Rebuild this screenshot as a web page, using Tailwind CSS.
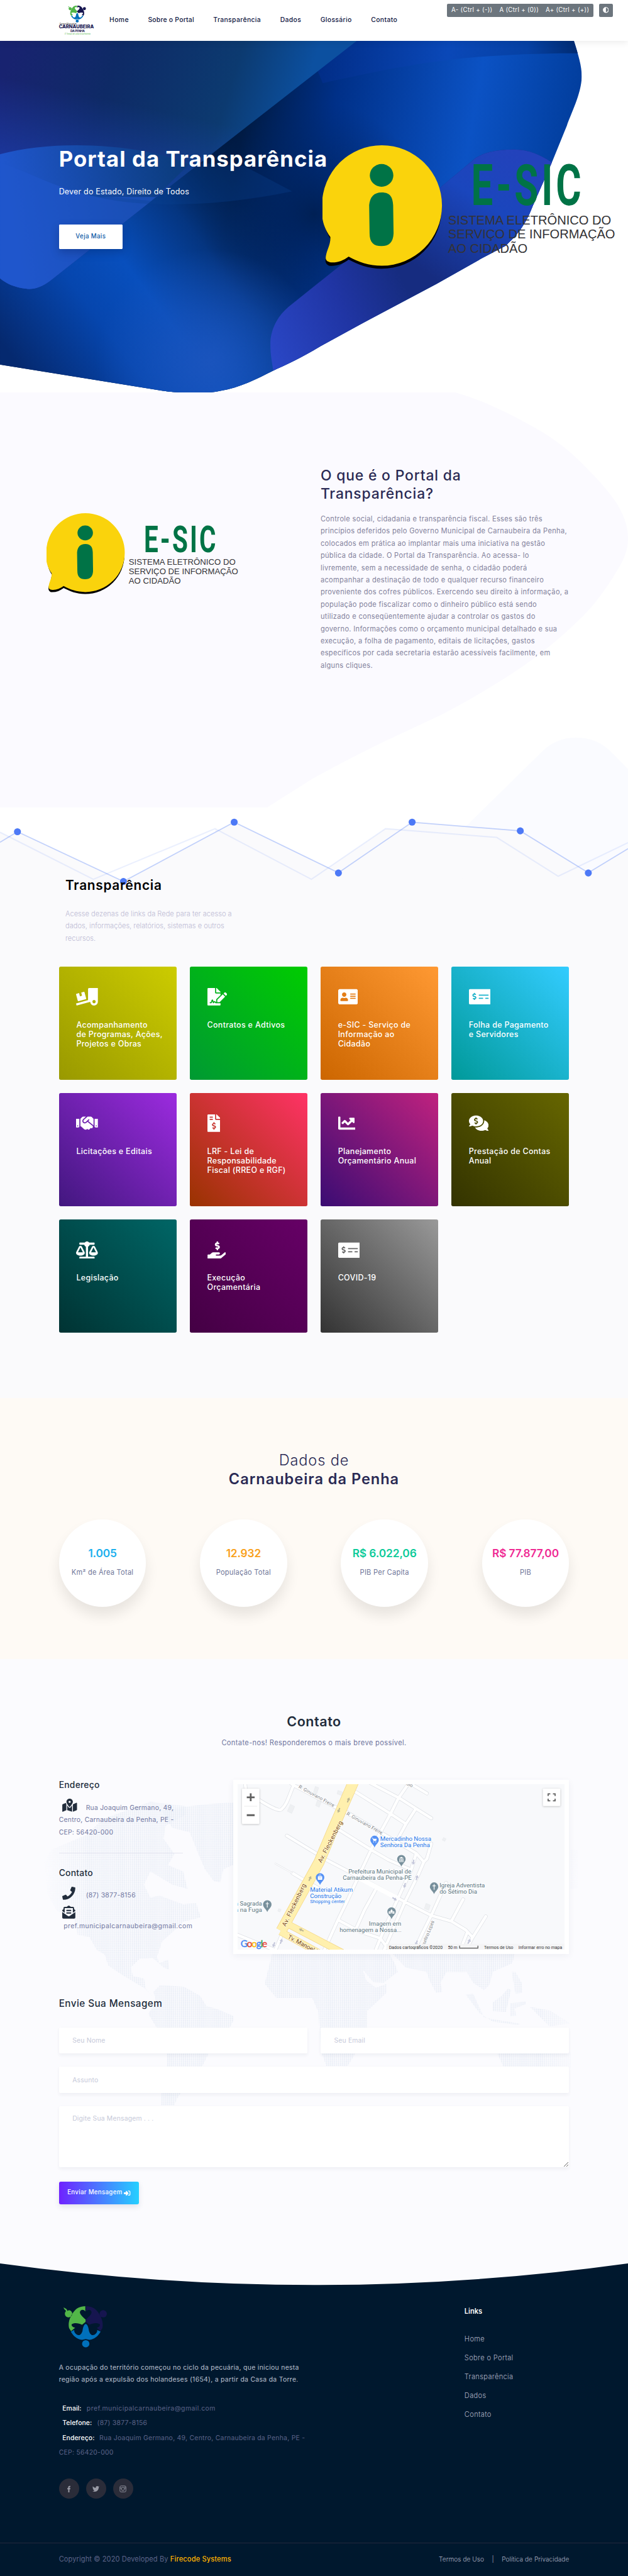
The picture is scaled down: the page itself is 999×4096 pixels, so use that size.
<!DOCTYPE html>
<html lang="pt-BR">
<head>
<meta charset="utf-8">
<title>Portal da Transparência</title>
<script src="https://cdn.jsdelivr.net/npm/@tailwindcss/browser@4"></script>
</head>
<body class="bg-[#00182e] overflow-x-hidden">

<svg class="absolute w-0 h-0" aria-hidden="true">
  <defs>
    <symbol id="emblem" viewBox="0 0 103 96">
      <path fill="#52b648" d="M0 3C6 5 9 8 9 11L13 9A8.500 8.500 0 1 1 6 11C3 9 1 6 0 3ZM50.500 0C38 0 29 5 23 14C14 26 10 40 13 51L17.500 58L27 50C19 48 17 43 20 41C26 38 36 39 43 43L51.400 36L51.400 31C44 25 38 19 38 14C39 7 47 7 50.500 12Z"/>
      <path fill="#16154f" d="M52.500 0C65 0 74 5 80 14C89 26 93 40 90 51L85.500 58L77 50C84 48 86 43 83 41C77 38 67 39 60 43L51.400 36L51.400 31C59 25 65 19 65 14C64 7 56 7 52.500 12Z"/>
      <circle cx="92" cy="17.500" r="8.500" fill="#16154f"/>
      <path fill="#0070bb" d="M51.500 41C56 42 58 50 59 57C61 65 66 69 72 66C77 63 79 58 78 55L86 59C81 68 72 77 60 78L51.500 76L43 78C31 77 22 68 17 59L25 55C24 58 26 63 31 66C37 69 42 65 44 57C45 50 47 42 51.500 41Z"/>
      <circle cx="51.500" cy="87" r="8.500" fill="#0070bb"/>
    </symbol>
    <symbol id="esic" viewBox="739 333 672 284">
      <path fill="#000" d="M875 341a137 137 0 1 1-1 275C845 616 820 606 799 595C785 606 768 611 754 609C748 606 745 602 746 594C749 578 757 565 757 547C747 532 740 510 739 477Z"/>
      <path fill="#fad30c" d="M875 333a137.500 137.500 0 0 1 0 276C846 609 820 600 799 588C786 598 770 603 756 601C748 599 745 595 747 586C750 570 758 560 757 543C733 510 738 480 738 470A137 137 0 0 1 875 333Z"/>
      <ellipse cx="874.500" cy="402" rx="27" ry="26" fill="#007346"/>
      <path fill="#007346" d="M875 441C895 441 900 453 901 470L902 535C901 555 892 564 874 564C856 564 847 555 847 535L846 470C848 452 856 441 875 441Z"/>
      <text transform="translate(1080 469.500) scale(0.68 1)" font-family="Roboto" font-weight="700" font-size="131" fill="#007346" textLength="371" lengthAdjust="spacing">E-SIC</text>
      <g font-family="Liberation Sans" font-size="29.300" fill="#333336">
        <text x="1027" y="514.500" textLength="374" lengthAdjust="spacingAndGlyphs">SISTEMA ELETRÔNICO DO</text>
        <text x="1027" y="547" textLength="383" lengthAdjust="spacingAndGlyphs">SERVIÇO DE INFORMAÇÃO</text>
        <text x="1027" y="579" textLength="182" lengthAdjust="spacingAndGlyphs">AO CIDADÃO</text>
      </g>
    </symbol>
    <symbol id="check" viewBox="0 0 640 512"><path d="M608 32H32C14.330 32 0 46.330 0 64v384c0 17.670 14.330 32 32 32h576c17.670 0 32-14.330 32-32V64c0-17.670-14.330-32-32-32zM176 327.880V344c0 4.420-3.580 8-8 8h-16c-4.420 0-8-3.580-8-8v-16.290c-11.290-.58-22.270-4.520-31.370-11.350-3.900-2.930-4.100-8.770-.57-12.140l11.750-11.210c2.770-2.640 6.890-2.760 10.130-.73 3.870 2.420 8.260 3.720 12.820 3.720h28.110c6.500 0 11.800-5.920 11.800-13.190 0-5.950-3.610-11.190-8.770-12.730l-45-13.500c-18.590-5.580-31.580-23.420-31.580-43.390 0-24.520 19.050-44.440 42.670-45.070V152c0-4.420 3.580-8 8-8h16c4.420 0 8 3.580 8 8v16.290c11.290.58 22.270 4.510 31.370 11.350 3.900 2.930 4.100 8.770.57 12.140l-11.750 11.210c-2.770 2.640-6.890 2.760-10.130.73-3.870-2.430-8.260-3.720-12.820-3.720h-28.110c-6.500 0-11.800 5.920-11.800 13.190 0 5.950 3.610 11.190 8.770 12.730l45 13.500c18.590 5.580 31.580 23.420 31.580 43.390 0 24.530-19.050 44.440-42.670 45.070zM416 312c0 4.420-3.580 8-8 8H296c-4.420 0-8-3.580-8-8v-16c0-4.420 3.580-8 8-8h112c4.420 0 8 3.580 8 8v16zm160 0c0 4.420-3.580 8-8 8h-80c-4.420 0-8-3.580-8-8v-16c0-4.420 3.580-8 8-8h80c4.420 0 8 3.580 8 8v16zm0-96c0 4.420-3.580 8-8 8H296c-4.420 0-8-3.580-8-8v-16c0-4.420 3.580-8 8-8h272c4.420 0 8 3.580 8 8v16z"/></symbol>
  </defs>
</svg>

<div class="w-[1440px] h-[5905px] overflow-hidden [zoom:0.69375] bg-white font-[Inter,sans-serif] relative">

<!-- Header -->
<header class="relative z-20 h-[93px] bg-white flex items-center pl-[134px] pr-[35px] shadow-[0_5px_14px_rgba(0,0,0,0.07)]">
  <svg class="w-[83px] h-[70px] shrink-0" viewBox="0 0 83 70">
    <use href="#emblem" x="22" y="1" width="42" height="39.500"/>
    <g text-anchor="middle" font-family="Inter">
      <text x="22" y="44.500" font-size="4.200" fill="#222" textLength="39">Governo Municipal de</text>
      <text x="41" y="54" font-size="10.500" font-weight="800" fill="#16154f" textLength="80" lengthAdjust="spacingAndGlyphs">CARNAUBEIRA</text>
      <text x="44" y="61.500" font-size="7" font-weight="700" fill="#16154f" textLength="33">DA PENHA</text>
      <text x="44" y="68" font-size="4.500" font-style="italic" fill="#52b648" textLength="59">É Tempo de uma nova história</text>
    </g>
  </svg>
  <nav class="flex gap-[44px] ml-[34px] text-[15px] font-medium tracking-[0.035em] text-[#0d1440] whitespace-nowrap">
    <a>Home</a><a class="tracking-[0.021em]">Sobre o Portal</a><a>Transparência</a><a>Dados</a><a>Glossário</a><a>Contato</a>
  </nav>
  <div class="ml-auto self-start mt-[8px] flex gap-[12px] text-white">
    <div class="h-[31px] w-[336px] rounded-[3px] bg-[#6c757d] flex items-center justify-between px-[10px] text-[14px] tracking-[0.034em] whitespace-nowrap"><span>A- (Ctrl + (-))</span><span>A (Ctrl + (0))</span><span>A+ (Ctrl + (+))</span></div>
    <div class="h-[31px] w-[32px] rounded-[3px] bg-[#6c757d] flex items-center justify-center"><svg class="w-[14px] h-[14px]" viewBox="0 0 512 512" fill="currentColor"><path d="M8 256c0 136.966 111.033 248 248 248s248-111.034 248-248S392.966 8 256 8 8 119.033 8 256zm248 184V72c101.705 0 184 82.311 184 184 0 101.705-82.311 184-184 184z"/></svg></div>
  </div>
</header>

<!-- Hero -->
<section class="relative h-[807px] bg-white pl-[135px] pt-[241px] text-white">
  <svg class="absolute inset-0 w-[1440px] h-[807px]" viewBox="0 93 1440 807">
    <defs>
      <clipPath id="blob"><path d="M0 93H1316C1326 125 1334 150 1334 175C1333 215 1308 262 1300 287L1267 368L1221 473C1205 515 1185 540 1159 563L1102 593L1001 650L826 743L735 793C690 820 655 836 624 850C590 867 550 888 505 895C480 900 460 900 441 899C410 899 390 898 367 894L0 835Z"/></clipPath>
      <linearGradient id="hm" gradientUnits="userSpaceOnUse" x1="560" y1="280" x2="1340" y2="420"><stop offset="0" stop-color="#001a42"/><stop offset=".25" stop-color="#003088"/><stop offset=".65" stop-color="#0b52c4"/><stop offset="1" stop-color="#003a96"/></linearGradient>
      <linearGradient id="hb" gradientUnits="userSpaceOnUse" x1="60" y1="860" x2="620" y2="440"><stop offset="0" stop-color="#05296f"/><stop offset=".3" stop-color="#0646ae"/><stop offset=".48" stop-color="#084fbd"/><stop offset=".72" stop-color="#053887" stop-opacity=".9"/><stop offset="1" stop-color="#002356" stop-opacity="0"/></linearGradient>
      <linearGradient id="ht" gradientUnits="userSpaceOnUse" x1="730" y1="60" x2="1330" y2="110"><stop offset="0" stop-color="#012c85"/><stop offset=".5" stop-color="#0a48b8"/><stop offset=".8" stop-color="#0641a4"/><stop offset="1" stop-color="#002a70"/></linearGradient>
      <linearGradient id="hl" gradientUnits="userSpaceOnUse" x1="0" y1="200" x2="640" y2="400"><stop offset="0" stop-color="#182370"/><stop offset=".35" stop-color="#0e2a66"/><stop offset=".75" stop-color="#0c3a70"/><stop offset="1" stop-color="#0c50a0"/></linearGradient>
      <linearGradient id="hlv" gradientUnits="userSpaceOnUse" x1="120" y1="200" x2="60" y2="480"><stop offset="0" stop-color="#2045c0" stop-opacity="0"/><stop offset="1" stop-color="#2045c0" stop-opacity=".85"/></linearGradient>
      <linearGradient id="he" gradientUnits="userSpaceOnUse" x1="20" y1="450" x2="400" y2="380"><stop offset="0" stop-color="#1f56cc"/><stop offset="1" stop-color="#0c3d80"/></linearGradient>
      <radialGradient id="hd" gradientUnits="userSpaceOnUse" cx="720" cy="490" r="260"><stop offset="0" stop-color="#001f52" stop-opacity=".95"/><stop offset="1" stop-color="#00286a" stop-opacity="0"/></radialGradient>
      <radialGradient id="hc" gradientUnits="userSpaceOnUse" cx="480" cy="830" r="260"><stop offset="0" stop-color="#1a54bd"/><stop offset="1" stop-color="#1a54bd" stop-opacity="0"/></radialGradient>
      <linearGradient id="hp" gradientUnits="userSpaceOnUse" x1="610" y1="800" x2="1010" y2="620"><stop offset="0" stop-color="#2a47c6"/><stop offset=".45" stop-color="#2035a4"/><stop offset=".8" stop-color="#162c80"/><stop offset="1" stop-color="#162c80"/></linearGradient>
      <linearGradient id="hp2" gradientUnits="userSpaceOnUse" x1="1000" y1="640" x2="1190" y2="350"><stop offset="0" stop-color="#1a46bd" stop-opacity="0"/><stop offset=".6" stop-color="#1a46bd"/><stop offset="1" stop-color="#2342bb"/></linearGradient>
    </defs>
    <g clip-path="url(#blob)">
      <rect y="93" width="1440" height="810" fill="url(#hm)"/>
      <path d="M700 93H1440V124C1290 118 1170 123 1060 133C950 145 860 163 740 190Z" fill="url(#ht)"/>
      <rect y="93" width="1440" height="810" fill="url(#hb)"/>
      <rect x="400" y="200" width="600" height="600" fill="url(#hd)"/>
      <rect x="200" y="560" width="560" height="340" fill="url(#hc)"/>
      <path d="M0 93H818L347 460L280 513L115 643C95 658 75 664 60 661C35 658 15 650 0 637Z" fill="url(#hl)"/>
      <path d="M0 93H818L347 460L280 513L115 643C95 658 75 664 60 661C35 658 15 650 0 637Z" fill="url(#hlv)"/>
      <path d="M0 353C60 336 140 330 211 333C300 337 370 350 434 376L347 460L280 513L115 643C95 658 75 664 60 661C35 658 15 650 0 637Z" fill="url(#he)"/>
      <path d="M0 371C90 405 150 440 230 451L358 451L347 460L280 513L115 643C95 658 75 664 60 661C35 658 15 650 0 637Z" fill="#1f57cc" opacity=".6"/>
      <path d="M200 445C300 475 480 478 670 438L560 380L440 372L347 460Z" fill="#0b4192" opacity=".3"/>
      <path d="M1175 342C1130 343 1110 350 1090 362L1012 427L790 600L661 703C632 728 620 760 620 787C620 815 624 830 627 852L700 900L1300 700L1290 390C1240 350 1210 342 1175 342Z" fill="url(#hp)"/>
      <path d="M1175 342C1130 343 1110 350 1090 362L1012 427L790 600L661 703C632 728 620 760 620 787C620 815 624 830 627 852L700 900L1300 700L1290 390C1240 350 1210 342 1175 342Z" fill="url(#hp2)"/>
    </g>
  </svg>
  <h1 class="relative text-[50px] leading-[60px] font-bold tracking-[0.031em] whitespace-nowrap">Portal da Transparência</h1>
  <svg class="absolute left-[739px] top-[240px] w-[672px] h-[284px]"><use href="#esic" width="672" height="284"/></svg>
  <p class="relative mt-[31px] text-[18px] leading-[28px] tracking-[0.016em]">Dever do Estado, Direito de Todos</p>
  <a class="relative mt-[62px] w-[146px] h-[56px] bg-white rounded-[2px] flex items-center justify-center text-[14px] font-medium tracking-[0.037em] text-[#0c5aa6] shadow-[0_8px_20px_rgba(0,20,60,0.25)]">Veja Mais</a>
</section>

<!-- Sobre o Portal -->
<section class="relative h-[951px] bg-white flex pl-[107px]">
  <svg class="absolute inset-0 w-[1440px] h-[951px]" viewBox="0 900 1440 951"><path fill="#fbfaff" d="M0 900H1044C1085 912 1118 925 1148 940C1190 960 1220 977 1249 994C1290 1020 1318 1045 1341 1069C1375 1103 1398 1130 1414 1154C1430 1180 1440 1205 1440 1235C1440 1262 1430 1285 1414 1310C1390 1350 1362 1390 1322 1427C1285 1463 1245 1495 1203 1525C1145 1565 1080 1603 1010 1640L882 1699.500C825 1727 770 1756 716 1785.600L613 1851H0Z"/></svg>
  <svg class="relative mt-[276px] w-[440px] h-[186px] shrink-0"><use href="#esic" width="440" height="186"/></svg>
  <div class="relative ml-[188px] pt-[169px] whitespace-nowrap">
    <h2 class="text-[33px] leading-[42px] font-medium tracking-[0.036em] text-[#2a2a54]">O que é o Portal da<br>Transparência?</h2>
    <p class="mt-[23px] text-[16px] leading-[28px] tracking-[0.028em] text-[#83829c]">Controle social, cidadania e transparência fiscal. Esses são três<br>princípios deferidos pelo Governo Municipal de Carnaubeira da Penha,<br>colocados em prática ao implantar mais uma iniciativa na gestão<br>pública da cidade. O Portal da Transparência. Ao acessa- lo<br>livremente, sem a necessidade de senha, o cidadão poderá<br>acompanhar a destinação de todo e qualquer recurso financeiro<br>proveniente dos cofres públicos. Exercendo seu direito à informação, a<br>população pode fiscalizar como o dinheiro público está sendo<br>utilizado e conseqüentemente ajudar a controlar os gastos do<br>governo. Informações como o orçamento municipal detalhado e sua<br>execução, a folha de pagamento, editais de licitações, gastos<br>específicos por cada secretaria estarão acessíveis facilmente, em<br>alguns cliques.</p>
  </div>
</section>

<!-- Transparência -->
<section class="relative h-[1354px] pt-[159px]">
  <svg class="absolute left-0 -top-[161px] w-[1440px] h-[1515px]" viewBox="0 1690 1440 1515">
    <path fill="#fafbff" d="M1070 1893L1240 1726C1262 1703 1290 1691 1320 1691C1350 1691 1375 1700 1396 1719L1440 1763V2100H1000Z"/>
    <path fill="#fafafc" d="M0 1931L40 1907L283 2021L537 1885L776 2001L945 1885L1193 1905L1349 2001L1440 1946V3205H0Z"/>
    <path fill="#fafafc" d="M0 1908L214 2016L283 2030L0 2030ZM493 1900L714 2016L884 1900L1139 1920L1280 2009L1349 2010L500 2020Z"/>
    <path fill="none" stroke="#4d79f6" stroke-opacity=".11" stroke-width="3" d="M0 1908L214 2016L493 1900L714 2016L884 1900L1139 1920L1280 2009L1440 1932"/>
    <path fill="none" stroke="#4d79f6" stroke-opacity=".33" stroke-width="2.500" d="M0 1931L40 1907L283 2021L537 1885L776 2001L945 1885L1193 1905L1349 2001L1440 1946"/>
    <g fill="#4d79f6"><circle cx="40" cy="1907" r="8"/><circle cx="283" cy="2021" r="8"/><circle cx="537" cy="1885" r="8"/><circle cx="776" cy="2001.500" r="8"/><circle cx="945" cy="1885" r="8"/><circle cx="1193" cy="1905" r="8"/><circle cx="1349" cy="2001.500" r="8"/></g>
  </svg>
  <div class="relative pl-[150px] whitespace-nowrap">
    <h2 class="text-[30px] leading-[40px] font-semibold tracking-[0.035em] text-black">Transparência</h2>
    <p class="mt-[31px] text-[16px] leading-[28px] font-light text-[#bdbad4]">Acesse dezenas de links da Rede para ter acesso a<br>dados, informações, relatórios, sistemas e outros<br>recursos.</p>
  </div>
  <div class="relative mt-[50px] px-[135px] grid grid-cols-4 auto-rows-[260px] gap-[30px] text-white text-[18px] leading-[22px] font-medium tracking-[0.025em] whitespace-nowrap">
    <a class="rounded-[4px] pl-[40px] pt-[50px] bg-[linear-gradient(45deg,#999900,#cccc00)]"><svg class="h-[40px] w-[50px]" viewBox="0 0 640 512" fill="currentColor"><path d="M50.200 375.600c2.300 8.500 11.100 13.600 19.600 11.300l216.400-58c8.500-2.300 13.600-11.100 11.300-19.600l-49.700-185.500c-2.300-8.500-11.100-13.600-19.600-11.300L151 133.300l24.800 92.700-61.800 16.500-24.800-92.700-77.300 20.700C3.400 172.800-1.700 181.600.6 190.100l49.600 185.500zM384 0c-17.700 0-32 14.300-32 32v323.600L5.900 450c-4.300 1.200-6.800 5.600-5.600 9.800l12.600 46.300c1.200 4.300 5.600 6.800 9.800 5.600l393.700-107.400C418.800 464.100 467.600 512 528 512c61.900 0 112-50.100 112-112V0H384zm144 448c-26.500 0-48-21.500-48-48s21.500-48 48-48 48 21.500 48 48-21.500 48-48 48z"/></svg><h3 class="mt-[32.5px]">Acompanhamento<br>de Programas, Ações,<br>Projetos e Obras</h3></a>
    <a class="rounded-[4px] pl-[40px] pt-[50px] bg-[linear-gradient(45deg,#009933,#00cc00)]"><svg class="h-[40px] w-[45px]" viewBox="0 0 576 512" fill="currentColor"><path d="M218.170 424.140c-2.950-5.920-8.090-6.520-10.170-6.520s-7.220.59-10.020 6.190l-7.670 15.340c-6.370 12.780-25.030 11.370-29.480-2.090L144 386.590l-10.610 31.880c-5.890 17.660-22.380 29.530-41 29.530H80c-8.840 0-16-7.160-16-16s7.160-16 16-16h12.390c4.830 0 9.110-3.080 10.640-7.660l18.190-54.640c3.300-9.810 12.440-16.410 22.780-16.410s19.480 6.590 22.770 16.410l13.880 41.640c19.750-16.190 54.060-9.700 66 14.160 1.890 3.780 5.490 5.950 9.360 6.260v-82.120l128-127.090V160H248c-13.200 0-24-10.800-24-24V0H24C10.700 0 0 10.700 0 24v464c0 13.300 10.700 24 24 24h336c13.300 0 24-10.700 24-24v-40l-128-.11c-16.120-.31-30.580-9.280-37.830-23.750zM384 121.900c0-6.300-2.500-12.400-7-16.900L279.100 7c-4.500-4.500-10.600-7-17-7H256v128h128v-6.100zm-96 225.060V416h68.990l161.680-162.780-67.880-67.880L288 346.960zm280.540-179.630l-31.870-31.870c-9.940-9.940-26.070-9.940-36.010 0l-27.250 27.250 67.880 67.880 27.250-27.250c9.950-9.940 9.950-26.070 0-36.010z"/></svg><h3 class="mt-[32.5px]">Contratos e Adtivos</h3></a>
    <a class="rounded-[4px] pl-[40px] pt-[50px] bg-[linear-gradient(45deg,#cc6600,#ff9933)]"><svg class="h-[40px] w-[45px]" viewBox="0 0 576 512" fill="currentColor"><path d="M528 32H48C21.500 32 0 53.500 0 80v352c0 26.500 21.500 48 48 48h480c26.500 0 48-21.500 48-48V80c0-26.500-21.500-48-48-48zm-352 96c35.300 0 64 28.700 64 64s-28.700 64-64 64-64-28.700-64-64 28.700-64 64-64zm112 236.800c0 10.600-10 19.200-22.400 19.200H86.400C74 384 64 375.400 64 364.800v-19.200c0-31.800 30.100-57.600 67.200-57.600h5c12.300 5.100 25.700 8 39.800 8s27.600-2.900 39.800-8h5c37.100 0 67.200 25.800 67.200 57.600v19.200zM512 312c0 4.400-3.600 8-8 8H360c-4.400 0-8-3.600-8-8v-16c0-4.400 3.600-8 8-8h144c4.400 0 8 3.600 8 8v16zm0-64c0 4.400-3.600 8-8 8H360c-4.400 0-8-3.600-8-8v-16c0-4.400 3.600-8 8-8h144c4.400 0 8 3.600 8 8v16zm0-64c0 4.400-3.600 8-8 8H360c-4.400 0-8-3.600-8-8v-16c0-4.400 3.600-8 8-8h144c4.400 0 8 3.600 8 8v16z"/></svg><h3 class="mt-[32.5px]">e-SIC - Serviço de<br>Informação ao<br>Cidadão</h3></a>
    <a class="rounded-[4px] pl-[40px] pt-[50px] bg-[linear-gradient(45deg,#009999,#33ccff)]"><svg class="h-[40px] w-[50px] fill-current"><use href="#check" width="50" height="40"/></svg><h3 class="mt-[32.5px]">Folha de Pagamento<br>e Servidores</h3></a>
    <a class="rounded-[4px] pl-[40px] pt-[50px] bg-[linear-gradient(45deg,#42177f,#9c2bdf)]"><svg class="h-[40px] w-[50px]" viewBox="0 0 640 512" fill="currentColor"><path d="M434.700 64h-85.900c-8 0-15.700 3-21.600 8.400l-98.300 90c-.1.1-.2.3-.3.4-16.600 15.600-16.300 40.500-2.100 56 12.700 13.900 39.400 17.600 56.100 2.700.1-.1.3-.1.4-.2l79.900-73.200c6.500-5.900 16.700-5.500 22.600 1 6 6.500 5.500 16.600-1 22.600l-26.100 23.900L504 313.800c2.900 2.400 5.500 5 7.900 7.700V128l-54.600-54.600c-5.900-6-14.100-9.400-22.600-9.400zM544 128.200v223.900c0 17.700 14.300 32 32 32h64V128.200h-96zm48 223.900c-8.800 0-16-7.200-16-16s7.200-16 16-16 16 7.200 16 16-7.200 16-16 16zM0 384h64c17.700 0 32-14.300 32-32V128.200H0V384zm48-63.900c8.800 0 16 7.200 16 16s-7.200 16-16 16-16-7.200-16-16c0-8.900 7.200-16 16-16zm435.900 18.600L334.600 217.500l-30 27.500c-29.700 27.100-75.200 24.500-101.700-4.400-26.900-29.400-24.800-74.900 4.400-101.700L289.100 64h-83.800c-8.500 0-16.600 3.400-22.600 9.400L128 128v223.900h18.300l90.500 81.900c27.400 22.300 67.700 18.100 90-9.300l.2-.2 17.900 15.500c15.900 13 39.400 10.500 52.300-5.400l31.400-38.600 5.400 4.400c13.700 11.100 33.900 9.100 45-4.700l9.500-11.700c11.200-13.800 9.100-33.900-4.600-45.100z"/></svg><h3 class="mt-[32.5px]">Licitações e Editais</h3></a>
    <a class="rounded-[4px] pl-[40px] pt-[50px] bg-[linear-gradient(45deg,#993300,#ff3366)]"><svg class="h-[40px] w-[30px]" viewBox="0 0 384 512" fill="currentColor"><path d="M377 105L279.100 7c-4.500-4.500-10.600-7-17-7H256v128h128v-6.100c0-6.300-2.500-12.400-7-16.900zm-153 31V0H24C10.700 0 0 10.700 0 24v464c0 13.300 10.700 24 24 24h336c13.300 0 24-10.700 24-24V160H248c-13.200 0-24-10.800-24-24zM64 72c0-4.420 3.580-8 8-8h80c4.420 0 8 3.580 8 8v16c0 4.420-3.580 8-8 8H72c-4.420 0-8-3.580-8-8V72zm0 80v-16c0-4.420 3.580-8 8-8h80c4.420 0 8 3.580 8 8v16c0 4.420-3.580 8-8 8H72c-4.420 0-8-3.580-8-8zm144 263.880V440c0 4.420-3.580 8-8 8h-16c-4.420 0-8-3.580-8-8v-24.290c-11.290-.58-22.270-4.520-31.370-11.350-3.900-2.930-4.100-8.770-.57-12.140l11.750-11.210c2.770-2.640 6.890-2.760 10.130-.73 3.870 2.420 8.260 3.720 12.820 3.720h28.110c6.500 0 11.800-5.920 11.800-13.190 0-5.950-3.610-11.190-8.770-12.730l-45-13.500c-18.590-5.580-31.580-23.420-31.580-43.390 0-24.520 19.050-44.440 42.670-45.070V232c0-4.420 3.580-8 8-8h16c4.420 0 8 3.580 8 8v24.290c11.290.58 22.270 4.510 31.370 11.350 3.900 2.930 4.100 8.770.57 12.140l-11.750 11.210c-2.770 2.640-6.890 2.760-10.130.73-3.870-2.430-8.260-3.720-12.820-3.720h-28.110c-6.500 0-11.800 5.920-11.800 13.190 0 5.950 3.610 11.190 8.770 12.730l45 13.500c18.590 5.580 31.580 23.420 31.580 43.390 0 24.530-19.050 44.440-42.670 45.070z"/></svg><h3 class="mt-[32.5px]">LRF - Lei de<br>Responsabilidade<br>Fiscal (RREO e RGF)</h3></a>
    <a class="rounded-[4px] pl-[40px] pt-[50px] bg-[linear-gradient(45deg,#3a0c73,#c0227f)]"><svg class="h-[40px] w-[40px]" viewBox="0 0 512 512" fill="currentColor"><path d="M496 384H64V80c0-8.840-7.160-16-16-16H16C7.160 64 0 71.160 0 80v336c0 17.670 14.330 32 32 32h464c8.840 0 16-7.160 16-16v-32c0-8.840-7.160-16-16-16zM464 96H345.940c-21.380 0-32.090 25.850-16.970 40.970l32.400 32.400L288 242.750l-73.370-73.370c-12.500-12.500-32.760-12.500-45.250 0l-68.690 68.690c-6.250 6.250-6.250 16.380 0 22.630l22.620 22.620c6.250 6.250 16.380 6.250 22.630 0L192 237.250l73.370 73.370c12.500 12.500 32.760 12.500 45.250 0l96-96 32.400 32.400c15.120 15.120 40.970 4.410 40.970-16.970V112c.01-8.840-7.150-16-15.990-16z"/></svg><h3 class="mt-[32.5px]">Planejamento<br>Orçamentário Anual</h3></a>
    <a class="rounded-[4px] pl-[40px] pt-[50px] bg-[linear-gradient(45deg,#333300,#666600)]"><svg class="h-[40px] w-[45px]" viewBox="0 0 576 512" fill="currentColor"><path d="M416 192c0-88.370-93.120-160-208-160S0 103.630 0 192c0 34.270 14.130 65.950 37.970 91.980C24.610 314.220 2.520 338.160 2.200 338.500A7.995 7.995 0 0 0 8 352c36.580 0 66.930-12.250 88.730-24.980C128.930 342.760 167.020 352 208 352c114.880 0 208-71.630 208-160zm-224 96v-16.290c-11.290-.58-22.270-4.520-31.370-11.350-3.900-2.930-4.100-8.770-.57-12.140l11.750-11.210c2.770-2.640 6.890-2.760 10.130-.73 3.870 2.420 8.260 3.720 12.820 3.720h28.110c6.500 0 11.800-5.920 11.800-13.190 0-5.950-3.610-11.190-8.770-12.730l-45-13.500c-18.590-5.580-31.580-23.420-31.580-43.390 0-24.520 19.050-44.440 42.670-45.070V96c0-4.420 3.580-8 8-8h16c4.420 0 8 3.580 8 8v16.290c11.290.58 22.270 4.510 31.370 11.350 3.900 2.930 4.100 8.770.57 12.140l-11.750 11.210c-2.770 2.640-6.890 2.760-10.130.73-3.870-2.430-8.260-3.720-12.820-3.720h-28.110c-6.500 0-11.800 5.920-11.800 13.190 0 5.950 3.610 11.190 8.770 12.730l45 13.500c18.590 5.580 31.580 23.420 31.580 43.390 0 24.530-19.050 44.440-42.670 45.070V288c0 4.420-3.580 8-8 8h-16c-4.420 0-8-3.580-8-8zm346.010 123.990C561.870 385.960 576 354.270 576 320c0-66.940-53.490-124.200-129.330-148.070.86 6.600 1.330 13.290 1.330 20.070 0 105.870-107.660 192-240 192-10.780 0-21.320-.77-31.730-1.880C207.800 439.630 281.770 480 368 480c40.980 0 79.070-9.240 111.270-24.980C501.070 467.750 531.420 480 568 480c3.200 0 6.090-1.910 7.340-4.840 1.270-2.940.66-6.340-1.550-8.670-.31-.33-22.420-24.240-35.780-54.500z"/></svg><h3 class="mt-[32.5px]">Prestação de Contas<br>Anual</h3></a>
    <a class="rounded-[4px] pl-[40px] pt-[50px] bg-[linear-gradient(45deg,#003333,#006666)]"><svg class="h-[40px] w-[50px]" viewBox="0 0 640 512" fill="currentColor"><path d="M256 336h-.02c0-16.180 1.340-8.730-85.050-181.510-17.650-35.290-68.190-35.360-85.870 0C-2.060 328.750.02 320.330.02 336H0c0 44.180 57.310 80 128 80s128-35.820 128-80zM128 176l72 144H56l72-144zm511.980 160c0-16.180 1.340-8.730-85.050-181.510-17.650-35.290-68.190-35.360-85.870 0-87.120 174.260-85.040 165.840-85.040 181.510H384c0 44.180 57.310 80 128 80s128-35.820 128-80h-.02zM440 320l72-144 72 144H440zm88 128H352V153.250c23.510-10.290 41.160-31.480 46.390-57.250H528c8.840 0 16-7.160 16-16V48c0-8.840-7.160-16-16-16H383.640C369.040 12.680 346.090 0 320 0s-49.040 12.680-63.640 32H112c-8.840 0-16 7.160-16 16v32c0 8.840 7.160 16 16 16h129.610c5.230 25.760 22.870 46.960 46.390 57.250V448H112c-8.840 0-16 7.160-16 16v32c0 8.840 7.160 16 16 16h416c8.840 0 16-7.160 16-16v-32c0-8.840-7.160-16-16-16z"/></svg><h3 class="mt-[32.5px]">Legislação</h3></a>
    <a class="rounded-[4px] pl-[40px] pt-[50px] bg-[linear-gradient(45deg,#440044,#660066)]"><svg class="h-[40px] w-[43px]" viewBox="0 0 544 512" fill="currentColor"><path d="M257.600 144.300l50 14.300c3.600 1 6.100 4.400 6.100 8.100 0 4.600-3.800 8.400-8.400 8.400h-32.800c-3.600 0-7.100-.8-10.300-2.200-4.800-2.200-10.400-1.700-14.100 2l-17.500 17.500c-5.300 5.300-4.700 14.300 1.500 18.400 9.500 6.300 20.300 10.100 31.800 11.500V240c0 8.800 7.200 16 16 16h16c8.800 0 16-7.200 16-16v-17.600c30.300-3.600 53.300-31 49.300-63-2.900-23-20.700-41.300-42.900-47.700l-50-14.300c-3.600-1-6.100-4.400-6.100-8.100 0-4.600 3.800-8.400 8.400-8.400h32.800c3.600 0 7.100.8 10.300 2.200 4.800 2.200 10.400 1.700 14.100-2l17.500-17.500c5.300-5.300 4.700-14.300-1.500-18.400-9.500-6.300-20.300-10.100-31.800-11.500V16c0-8.800-7.200-16-16-16h-16c-8.800 0-16 7.200-16 16v17.600c-30.300 3.600-53.300 31-49.300 63 2.900 23 20.600 41.300 42.900 47.700zm276.300 183.800c-11.200-10.700-28.500-10-40.300 0L406.400 402c-10.700 9.100-24 14-37.800 14H256.900c-8.300 0-15.100-7.200-15.100-16s6.800-16 15.100-16h73.900c15.100 0 29-10.900 31.400-26.600 3.100-20-11.500-37.400-29.800-37.400H181.300c-25.500 0-50.200 9.300-69.900 26.100L67.500 384H15.100C6.800 384 0 391.200 0 400v96c0 8.800 6.800 16 15.100 16H352c13.700 0 27-4.900 37.800-14l142.800-121c14.400-12.100 15.500-35.300 1.300-48.900z"/></svg><h3 class="mt-[32.5px]">Execução<br>Orçamentária</h3></a>
    <a class="rounded-[4px] pl-[40px] pt-[50px] bg-[linear-gradient(45deg,#333333,#999999)]"><svg class="h-[40px] w-[50px] fill-current"><use href="#check" width="50" height="40"/></svg><h3 class="mt-[32.5px]">COVID-19</h3></a>
  </div>
</section>

<!-- Dados -->
<section class="relative h-[598px] bg-[#fefaf5] pt-[120px]">
  <h2 class="text-center text-[34px] leading-[44px] text-[#2a2a54] font-light tracking-[0.037em]">Dados de<br><span class="font-semibold tracking-[0.041em]">Carnaubeira da Penha</span></h2>
  <div class="mt-[70px] px-[135px] flex justify-between text-center whitespace-nowrap text-[16px] text-[#6f7699] tracking-[0.02em]">
    <div class="size-[200px] rounded-full bg-white pt-[63px] shadow-[0_20px_30px_rgba(0,0,0,0.09)]"><b class="block text-[25px] leading-[30px] font-semibold tracking-[-0.01em] text-[#1cb0ee]">1.005</b><span class="block mt-[16px] leading-[24px]">Km² de Área Total</span></div>
    <div class="size-[200px] rounded-full bg-white pt-[63px] shadow-[0_20px_30px_rgba(0,0,0,0.09)]"><b class="block text-[25px] leading-[30px] font-semibold tracking-[-0.01em] text-[#f9a11b]">12.932</b><span class="block mt-[16px] leading-[24px]">População Total</span></div>
    <div class="size-[200px] rounded-full bg-white pt-[63px] shadow-[0_20px_30px_rgba(0,0,0,0.09)]"><b class="block text-[25px] leading-[30px] font-semibold tracking-[-0.006em] text-[#0ccb9a]">R$ 6.022,06</b><span class="block mt-[16px] leading-[24px]">PIB Per Capita</span></div>
    <div class="size-[200px] rounded-full bg-white pt-[63px] shadow-[0_20px_30px_rgba(0,0,0,0.09)]"><b class="block text-[25px] leading-[30px] font-semibold tracking-[-0.006em] text-[#ef2a94]">R$ 77.877,00</b><span class="block mt-[16px] leading-[24px]">PIB</span></div>
  </div>
</section>

<!-- Contato -->
<section class="relative h-[1385px] bg-[#fbfbfe] pt-[123px]">
  <svg class="absolute inset-0 w-[1440px] h-[1385px]" viewBox="0 3803 1440 1385">
    <defs>
      <pattern id="dots" width="4.500" height="4.100" patternUnits="userSpaceOnUse"><rect x=".8" y=".7" width="2.900" height="2.600" rx=".6" fill="#e6ebf5"/></pattern>
      <linearGradient id="fade" x1="0" x2="1"><stop offset="0" stop-color="#fff" stop-opacity="0"/><stop offset=".09" stop-color="#fff"/><stop offset=".92" stop-color="#fff"/><stop offset="1" stop-color="#fff" stop-opacity="0"/></linearGradient>
      <mask id="mf"><rect x="95" y="4100" width="1240" height="760" fill="url(#fade)"/></mask>
    </defs>
    <g fill="url(#dots)" mask="url(#mf)">
      <path d="M102 4268L118 4240L200 4205L235 4170L290 4150L345 4130L425 4140L425 4160L380 4185L375 4215L400 4250L385 4275L420 4290L430 4330L395 4320L345 4290L330 4320L345 4350L365 4345L420 4365L450 4362L460 4395L420 4405L400 4425L372 4450L360 4485L365 4500L385 4492L388 4515L375 4510L350 4488L320 4490L300 4510L305 4530L330 4535L335 4560L350 4575L332 4558L310 4545L285 4530L262 4515L248 4505L240 4480L222 4470L205 4440L178 4435L170 4400L130 4380L108 4340Z"/>
      <path d="M370 4150L450 4138L520 4132H545V4270L512 4285L505 4315L490 4312L470 4285L455 4250L435 4200L395 4190Z"/>
      <path d="M367 4550L422 4554L459 4575L473 4598L500 4606L535 4621L535 4632L528 4646L478 4680L478 4708L464 4736L440 4765L409 4805L399 4826H369L372 4770L383 4731L383 4690L358 4646L340 4616L358 4589L352 4566Z"/>
      <path d="M624 4478H892L905 4500L912 4520L880 4545L856 4544L832 4515L840 4540L862 4556L886 4548L886 4568L842 4610L842 4650L815 4700L812 4712L797 4736H748L736 4700L730 4612L716 4580L634 4580L607 4547Z"/>
      <path d="M900 4478H1180L1175 4500L1130 4520L1122 4550L1110 4562L1085 4545L1070 4520L1024 4520L1010 4545L1014 4566L1000 4568L985 4540L978 4520L930 4510Z"/>
      <path d="M1068 4572L1085 4570L1110 4625L1140 4630L1190 4638L1190 4642L1130 4634L1100 4615ZM1130 4590L1150 4575L1165 4558L1172 4562L1160 4612L1130 4610ZM1170 4592L1205 4588L1205 4594L1180 4604L1184 4620L1170 4622ZM1173 4520H1182L1196 4545L1198 4568L1182 4570ZM1215 4600L1260 4608L1308 4638L1260 4645L1240 4625ZM1160 4690L1290 4680L1309 4708V4740H1155L1141 4708ZM1308 4240H1325V4330H1308Z"/>
    </g>
  </svg>
  <div class="relative text-center">
    <h2 class="text-[31px] leading-[40px] font-semibold tracking-[0.025em] text-[#222d3c]">Contato</h2>
    <p class="mt-[17px] text-[16px] leading-[24px] tracking-[0.033em] text-[#7076a0]">Contate-nos! Responderemos o mais breve possível.</p>
  </div>
  <div class="relative mt-[72px] px-[135px] flex text-[15px] leading-[28px] text-[#7076a0] tracking-[0.023em] whitespace-nowrap">
    <div class="w-[400px] shrink-0">
      <h3 class="text-[20px] leading-[24px] font-medium text-[#222d3c]">Endereço</h3>
      <div class="mt-[20px] h-[34.5px] flex items-start text-[#222d3c]"><svg class="ml-[8px] w-[34px] h-[30px]" viewBox="0 0 576 512" fill="currentColor"><path d="M288 0c-69.590 0-126 56.410-126 126 0 56.260 82.350 158.800 113.900 196.020 6.390 7.540 17.820 7.540 24.200 0C331.650 284.800 414 182.260 414 126 414 56.410 357.590 0 288 0zm0 168c-23.200 0-42-18.800-42-42s18.800-42 42-42 42 18.800 42 42-18.800 42-42 42zM20.120 215.950A32.006 32.006 0 0 0 0 245.660v250.320c0 11.320 11.430 19.060 21.940 14.860L160 448V214.920c-8.840-15.980-16.070-31.540-21.250-46.420L20.120 215.950zM288 359.670c-14.070 0-27.380-6.180-36.510-16.960-19.660-23.200-40.570-49.620-59.490-76.720v182l192 64V266c-18.920 27.090-39.820 53.520-59.490 76.720-9.130 10.770-22.440 16.950-36.510 16.950zm266.060-198.510L416 224v288l139.880-55.950A31.996 31.996 0 0 0 576 426.340V176.020c0-11.320-11.430-19.060-21.940-14.860z"/></svg><span class="ml-[20px] mt-[6.5px] text-[#7076a0]">Rua Joaquim Germano, 49,</span></div>
      <p>Centro, Carnaubeira da Penha, PE -<br>CEP: 56420-000</p>
      <hr class="mt-[33px] w-[285px] border-0 h-[1px] bg-[#e6e6f0]">
      <h3 class="mt-[33px] text-[20px] leading-[24px] font-medium text-[#222d3c]">Contato</h3>
      <div class="mt-[20px] h-[43px] flex items-start text-[#222d3c]"><svg class="ml-[8px] size-[30px]" viewBox="0 0 512 512" fill="currentColor"><path d="M493.400 24.600l-104-24c-11.300-2.600-22.900 3.300-27.500 13.900l-48 112c-4.200 9.800-1.400 21.300 6.900 28l60.600 49.600c-36 76.700-98.900 140.500-177.200 177.200l-49.600-60.600c-6.800-8.300-18.200-11.100-28-6.900l-112 48C3.900 366.500-2 378.100.6 389.400l24 104C27.100 504.200 36.700 512 48 512c256.100 0 464-207.500 464-464 0-11.200-7.700-20.900-18.600-23.400z"/></svg><span class="ml-[24px] mt-[5.5px] text-[#7076a0]">(87) 3877-8156</span></div>
      <svg class="ml-[8px] size-[30px] text-[#222d3c]" viewBox="0 0 512 512" fill="currentColor"><path d="M176 216h160c8.840 0 16-7.160 16-16v-16c0-8.840-7.160-16-16-16H176c-8.840 0-16 7.160-16 16v16c0 8.840 7.160 16 16 16zm-16 80c0 8.840 7.160 16 16 16h160c8.840 0 16-7.160 16-16v-16c0-8.840-7.160-16-16-16H176c-8.840 0-16 7.160-16 16v16zm96 121.130c-16.420 0-32.840-5.060-46.860-15.190L0 250.860V464c0 26.510 21.490 48 48 48h416c26.510 0 48-21.490 48-48V250.860L302.860 401.940c-14.020 10.120-30.440 15.190-46.860 15.190zm237.610-254.180c-8.850-6.940-17.240-13.470-29.610-22.810V96c0-26.510-21.490-48-48-48h-77.550c-3.040-2.200-5.870-4.260-9.040-6.560C312.600 29.170 279.200-.35 256 0c-23.200-.35-56.590 29.170-73.410 41.440-3.170 2.300-6 4.360-9.040 6.560H96c-26.510 0-48 21.490-48 48v44.140c-12.370 9.330-20.760 15.870-29.610 22.810A47.995 47.995 0 0 0 0 200.720v10.650l96 69.350V96h320v184.720l96-69.350v-10.650c0-14.740-6.780-28.670-18.390-37.770z"/></svg>
      <p class="ml-[11px] mt-[4px] tracking-[0.044em]">pref.municipalcarnaubeira@gmail.com</p>
    </div>
    <div class="w-[770px] h-[400px] bg-white p-[10px] shadow-[0_5px_15px_rgba(40,50,90,0.06)]">
      <svg class="w-[750px] h-[380px] bg-[#f8f9fb]" viewBox="0 0 750 380" font-family="Roboto" letter-spacing="0">
        <defs>
          <g id="roads" fill="none" stroke-linecap="round" stroke-linejoin="round">
            <path d="M302 -4L373 33L409 56L444 78M385 -8L434 21M271 18L351 68L386 91M391 0L368 33L350 69L309 144L276 214L253 264L230 311L197 384M409 56L386 91L368 124M128 2L225 53M250 64L332 113L409 158L427 178M230 103L307 151L347 174L398 196M444 136L434 171L427 178L414 208L383 271L334 384M409 160L398 196L368 261L347 308L327 354L315 384M113 118L179 158M199 171L281 214L373 264L444 301L490 314L523 334L539 351M126 204L151 219M169 229L230 264M317 241L291 288L273 328M230 311L281 338L327 353L350 384M478 226L444 301L424 341L404 384M517 264L490 314M569 303L539 351L521 384M526 341L509 384M17 -4L19 15L52 38C75 52 93 62 100 58C112 48 115 35 128 3L120 -4M-4 344L100 386M103 341L85 384"/>
          </g>
          <path id="up" d="M0 -6L4 0H1.500V6H-1.500V0H-4Z"/>
          <path id="pin" d="M0 -10A9.700 9.700 0 0 1 9.700 0C9.700 6 2 11 0 17C-2 11 -9.700 6 -9.700 0A9.700 9.700 0 0 1 0 -10Z"/>
        </defs>
        <g fill="#eef0f2" stroke="#e2e4e8" stroke-width=".6"><path d="M121 46l10 5-7 16-10-5zM178 5l8 3-5 15-7-4zM183 36l9 4-5 13-8-4zM230 14l11 4-3 8-10-4zM472 122l6 3-3 6-6-3zM432 273l10 4-4 12-10-4zM94 285l6 2-3 6-5-2z"/></g>
        <use href="#roads" stroke="#dcdfe4" stroke-width="8.500"/>
        <use href="#roads" stroke="#fff" stroke-width="6.500"/>
        <path d="M281 216L368 262" stroke="#fff" stroke-width="11"/>
        <path d="M85 181L126 204" stroke="#dcdfe4" stroke-width="3.500"/><path d="M85 181L126 204" stroke="#fff" stroke-width="2"/>
        <g fill="none" stroke-linejoin="round"><path d="M98 338L186 386M112 319L240 386" stroke="#f3d481" stroke-width="16"/><path d="M266 -6L222 95L187 178L100 336" stroke="#f3d481" stroke-width="25"/><path d="M98 338L186 386M112 319L240 386" stroke="#fff0ae" stroke-width="14"/><path d="M266 -6L222 95L187 178L100 336" stroke="#fff0ae" stroke-width="23"/></g>
        <g fill="#bdb692"><use href="#up" transform="translate(254 36) rotate(22)"/><use href="#up" transform="translate(232 60) rotate(202)"/><use href="#up" transform="translate(166 216) rotate(24)"/><use href="#up" transform="translate(146 334) rotate(-62)"/></g>
        <g fill="#c3c6da"><use href="#up" transform="translate(403 179) rotate(190)"/><use href="#up" transform="translate(411 214) rotate(16)"/><use href="#up" transform="translate(383 232) rotate(196)"/><use href="#up" transform="translate(360 263) rotate(122)"/><use href="#up" transform="translate(83 368) rotate(200)"/><use href="#up" transform="translate(100 360) rotate(20)"/><use href="#up" transform="translate(531 360) rotate(25)"/><use href="#up" transform="translate(410 364) rotate(200)"/></g>
        <g stroke="#fff" stroke-width="2.500" stroke-linejoin="round" paint-order="stroke">
          <g fill="#7d8186" font-size="11">
            <text transform="translate(139 8) rotate(29)" textLength="92">R. Ginuviano Freire</text>
            <text transform="translate(249 70) rotate(29.500)" textLength="93">R. Ginuviano Freire</text>
            <text transform="translate(428 372) rotate(-68)" textLength="62">ourtino Lopes</text>
            <text transform="translate(386 1) rotate(25)">oio</text>
          </g>
          <g fill="#7a4a16" font-size="14" stroke="#fff7d6">
            <text transform="translate(192 181) rotate(-62.500)" textLength="106">Av. Fleckenberg</text>
            <text transform="translate(110 327) rotate(-64)" textLength="107">Av. Fleckenberg</text>
            <text transform="translate(114 353) rotate(28)">Tv. Manoel P</text>
          </g>
          <g fill="#1a73e8" font-size="14">
            <text x="327" y="130" textLength="117" lengthAdjust="spacingAndGlyphs">Mercadinho Nossa</text><text x="327" y="144" textLength="114" lengthAdjust="spacingAndGlyphs">Senhora Da Penha</text>
            <text x="166" y="247" textLength="98" lengthAdjust="spacingAndGlyphs">Material Atikum</text><text x="166" y="261" textLength="72" lengthAdjust="spacingAndGlyphs">Construção</text><text x="166" y="273" font-size="11.500" textLength="80" lengthAdjust="spacingAndGlyphs">Shopping center</text>
          </g>
          <g fill="#5a7480" font-size="14">
            <text x="254" y="205" textLength="144" lengthAdjust="spacingAndGlyphs">Prefeitura Municipal de</text><text x="241" y="219" textLength="158" lengthAdjust="spacingAndGlyphs">Carnaubeira da Penha-PE</text>
            <text x="463" y="237" textLength="104" lengthAdjust="spacingAndGlyphs">Igreja Adventista</text><text x="463" y="251" textLength="86" lengthAdjust="spacingAndGlyphs">do Sétimo Dia</text>
            <text x="301" y="325" textLength="74" lengthAdjust="spacingAndGlyphs">Imagem em</text><text x="234" y="339" textLength="142" lengthAdjust="spacingAndGlyphs">homenagem a Nossa...</text>
            <text x="-6" y="278" textLength="62" lengthAdjust="spacingAndGlyphs">a Sagrada</text><text x="-6" y="292" textLength="62" lengthAdjust="spacingAndGlyphs">a na Fuga</text>
          </g>
        </g>
        <g fill="#5491f5"><use href="#pin" x="314" y="128"/><use href="#pin" x="189" y="214"/></g>
        <g fill="#78909c"><use href="#pin" x="375.500" y="172"/><use href="#pin" x="450.500" y="235"/><use href="#pin" x="68" y="276"/><use href="#pin" x="353" y="292"/></g>
        <g fill="#fff">
          <path d="M308 123h2l1 2h8l-1.500 5h-6l-2-5.500h-1.500zM311 131.500h1.800v1.800H311zM316 131.500h1.800v1.800H316z"/>
          <path d="M184 211h10v8h-10zM186.500 211v-1.500a2.500 2.500 0 0 1 5 0v1.500h-1v-1.500a1.500 1.500 0 0 0-3 0v1.500z"/>
          <path d="M370 170l5.500-3.500 5.500 3.500zM371 171h2v5h-2zM374.500 171h2v5h-2zM378 171h2v5h-2zM370 176.500h11v1.500h-11z"/>
          <path d="M449.700 229h1.700v3h2.800v1.700h-2.800v8h-1.700v-8h-2.800V232h2.800zM67.200 270h1.700v3h2.800v1.700h-2.800v8h-1.700v-8h-2.800V273h2.800z"/>
          <path d="M353 286l2.500 4v7h-1.500v-3h-2v3h-1.500v-7zM346.500 292l3-1.500v6.500h-3zM359.500 292l-3-1.500v6.500h3z"/>
        </g>
        <path d="M187 214q2 2.500 4 0" fill="none" stroke="#5491f5"/>
        <g filter="drop-shadow(0 1px 2px rgba(0,0,0,.25))"><rect x="10" y="10" width="40" height="81" rx="2" fill="#fff"/><rect x="700" y="10" width="40" height="40" rx="2" fill="#fff"/></g>
        <path d="M15 50.500H45" stroke="#e4e4e4"/>
        <path d="M30 21V39M21 30H39M21 71H39" stroke="#5f5f5f" stroke-width="4"/>
        <path d="M712 27V22H717M723 22H728V27M728 33V38H723M717 38H712V33" fill="none" stroke="#5f5f5f" stroke-width="2.500"/>
        <text x="7" y="373" font-family="Lato" font-size="22" font-weight="400" stroke-width=".5" textLength="61"><tspan fill="#4285f4" stroke="#4285f4">G</tspan><tspan fill="#ea4335" stroke="#ea4335">o</tspan><tspan fill="#fbbc05" stroke="#fbbc05">o</tspan><tspan fill="#4285f4" stroke="#4285f4">g</tspan><tspan fill="#34a853" stroke="#34a853">l</tspan><tspan fill="#ea4335" stroke="#ea4335">e</tspan></text>
        <rect x="341" y="366" width="409" height="14" fill="#f5f5f5" opacity=".85"/>
        <g font-size="10" fill="#333"><text x="347" y="377" textLength="123">Dados cartográficos ©2020</text><text x="482" y="377" textLength="22">50 m</text><text x="565" y="377" textLength="67">Termos de Uso</text><text x="644" y="377" textLength="100">Informar erro no mapa</text></g>
        <path d="M509 370V375.500H551V370" fill="none" stroke="#555" stroke-width="1.800"/>
      </svg>
    </div>
  </div>
  <div class="relative mt-[99px] px-[135px]">
    <h3 class="text-[22px] leading-[28px] font-medium tracking-[0.03em] text-[#222d3c]">Envie Sua Mensagem</h3>
    <div class="mt-[41px] grid grid-cols-2 gap-[30px] text-[15px] tracking-[0.017em] [&_*]:placeholder:text-[#c6c9d9] [&_*]:bg-white [&_*]:rounded-[3px] [&_*]:px-[31px] [&_*]:shadow-[0_3px_8px_rgba(40,50,90,0.06)]">
      <input class="h-[60px]" placeholder="Seu Nome"><input class="h-[60px]" placeholder="Seu Email">
      <input class="h-[60px] col-span-2" placeholder="Assunto">
      <textarea class="h-[140px] col-span-2 pt-[18px] leading-[24px]" placeholder="Digite Sua Mensagem . . ."></textarea>
    </div>
    <button class="mt-[33px] w-[184px] h-[52px] rounded-[4px] bg-[linear-gradient(90deg,#6f22ff,#25d0ff)] text-white text-[14px] font-medium tracking-[0.031em] flex items-center justify-center gap-[4px] shadow-[0_5px_12px_rgba(40,50,90,0.12)] whitespace-nowrap">Enviar Mensagem<svg class="size-[15px] shrink-0" viewBox="0 0 512 512" fill="currentColor"><path d="M416 448h-84c-6.600 0-12-5.400-12-12v-40c0-6.600 5.400-12 12-12h84c17.700 0 32-14.300 32-32V160c0-17.700-14.300-32-32-32h-84c-6.600 0-12-5.400-12-12V76c0-6.600 5.400-12 12-12h84c53 0 96 43 96 96v192c0 53-43 96-96 96zm-47-201L201 79c-15-15-41-4.500-41 17v96H24c-13.300 0-24 10.700-24 24v96c0 13.300 10.700 24 24 24h136v96c0 21.500 26 32 41 17l168-168c9.300-9.400 9.300-24.600 0-34z"/></svg></button>
  </div>
</section>

<!-- Footer -->
<footer class="relative h-[717px] bg-[#00182e] pt-[98px] whitespace-nowrap">
  <svg class="absolute left-0 top-0 w-[1440px] h-[52px]" viewBox="0 0 1440 52"><path fill="#fbfbfe" d="M0 -2V0Q720 99 1440 0V-2Z"/></svg>
  <div class="relative flex px-[135px] h-[542px]">
    <div class="w-[930px] shrink-0">
      <svg class="ml-[11px] w-[102px] h-[95px]"><use href="#emblem" width="102" height="95"/></svg>
      <p class="mt-[31px] text-[15px] leading-[28px] tracking-[0.03em] text-[#bcc0d0]">A ocupação do território começou no ciclo da pecuária, que iniciou nesta<br>região após a expulsão dos holandeses (1654), a partir da Casa da Torre.</p>
      <p class="mt-[35px] text-[15px] leading-[34px] tracking-[0.026em] text-[#5d6489]"><span class="ml-[8px] mr-[12px] font-medium text-white tracking-[0.009em]">Email:</span><span class="tracking-[0.044em]">pref.municipalcarnaubeira@gmail.com</span><br><span class="ml-[8px] mr-[12px] font-medium text-white tracking-[0.009em]">Telefone:</span>(87) 3877-8156<br><span class="ml-[8px] mr-[11px] font-medium text-white tracking-[0.009em]">Endereço:</span>Rua Joaquim Germano, 49, Centro, Carnaubeira da Penha, PE -<br>CEP: 56420-000</p>
      <div class="mt-[42px] flex gap-[16px] text-[#9a9ba6] [&>a]:size-[46px] [&>a]:rounded-full [&>a]:bg-[#2a2c39] [&>a]:flex [&>a]:items-center [&>a]:justify-center">
        <a><svg class="size-[16px]" viewBox="0 0 16 16" fill="currentColor"><path d="M6.500 16V9H4.500V6.200H6.500V4.300C6.500 2 7.700 1 9.600 1H11.500V3.600H10.300C9.500 3.600 9.300 4 9.300 4.600V6.200H11.500L11.200 9H9.300V16Z"/></svg></a>
        <a><svg class="size-[16px]" viewBox="0 0 24 24" fill="currentColor"><path d="M24 4.600a10 10 0 0 1-2.800.8 5 5 0 0 0 2.100-2.700 10 10 0 0 1-3.100 1.200 4.900 4.900 0 0 0-8.400 4.500A14 14 0 0 1 1.700 3.200a4.900 4.900 0 0 0 1.500 6.600 4.900 4.900 0 0 1-2.200-.6 4.900 4.900 0 0 0 3.900 4.900 5 5 0 0 1-2.200.1 4.900 4.900 0 0 0 4.600 3.400A9.900 9.900 0 0 1 0 19.500 14 14 0 0 0 7.500 21.700c9.100 0 14.300-7.700 14-14.600A10 10 0 0 0 24 4.600z"/></svg></a>
        <a><svg class="size-[16px]" viewBox="0 0 16 16" fill="none" stroke="currentColor" stroke-width="1.300"><rect x="1.200" y="1.200" width="13.600" height="13.600" rx="2.500"/><circle cx="8" cy="8" r="3.600"/><path d="M1 5.800H4.800M11.200 5.800H15M11.800 3.300H13.300"/></svg></a>
      </div>
    </div>
    <div>
      <h3 class="text-[16px] leading-[24px] font-semibold text-white">Links</h3>
      <ul class="mt-[31px] text-[16px] leading-[43px] tracking-[0.03em] font-light text-[#b0b4c6]"><li>Home</li><li>Sobre o Portal</li><li>Transparência</li><li>Dados</li><li>Contato</li></ul>
    </div>
  </div>
  <div class="relative h-[75px] border-t border-[#23283c] flex items-center justify-between px-[135px] text-[16px] tracking-[0.008em] text-[#5d6489]">
    <p>Copyright © 2020 Developed By <span class="font-medium text-[#ffb200] tracking-[0.012em]">Firecode Systems</span></p>
    <p class="text-[14.5px] tracking-[0.006em] text-[#b0b4c6] font-light flex gap-[18px]"><span>Termos de Uso</span><span>|</span><span>Política de Privacidade</span></p>
  </div>
</footer>
</div>
</body>
</html>
